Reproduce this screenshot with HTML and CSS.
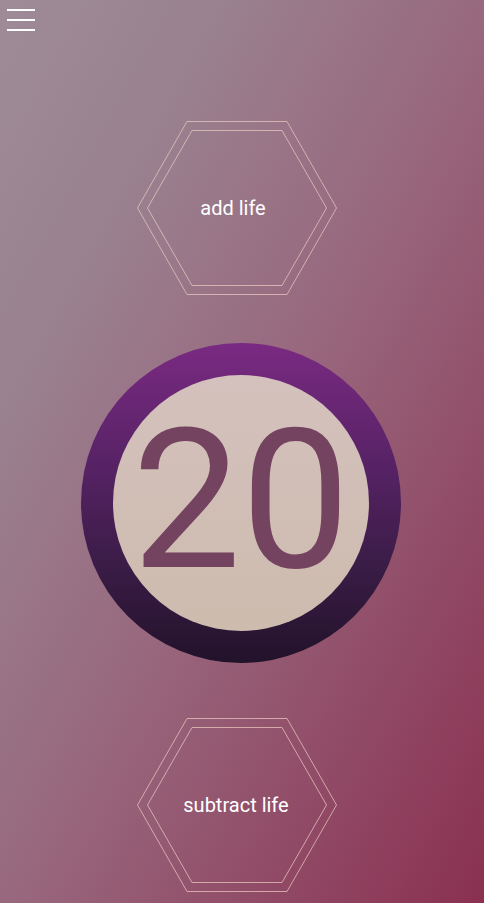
FILE: index.html
```html
<!DOCTYPE html>
<html lang="en">
<head>
<meta charset="utf-8">
<title>Life Counter</title>
<link rel="stylesheet" href="styles.css">
</head>
<body>
<div class="app">
  <header class="topbar">
    <button class="menu" aria-label="menu">
      <span class="bar"></span><span class="bar"></span><span class="bar"></span>
    </button>
  </header>
  <main class="stage">
    <button class="hex hex-add">
      <svg class="hex-shape" width="200" height="174" viewBox="0 0 200 174">
        <polygon points="50,0.5 150,0.5 199.5,87 150,173.5 50,173.5 0.5,87"/>
        <polygon points="55,9.5 145,9.5 189.5,87 145,164.5 55,164.5 10.5,87"/>
      </svg>
      <span class="hex-label label-add">add life</span>
    </button>
    <div class="counter">
      <div class="counter-face"><span class="life">20</span></div>
    </div>
    <button class="hex hex-sub">
      <svg class="hex-shape" width="200" height="174" viewBox="0 0 200 174">
        <polygon points="50,0.5 150,0.5 199.5,87 150,173.5 50,173.5 0.5,87"/>
        <polygon points="55,9.5 145,9.5 189.5,87 145,164.5 55,164.5 10.5,87"/>
      </svg>
      <span class="hex-label label-sub">subtract life</span>
    </button>
  </main>
</div>
</body>
</html>
```

FILE: styles.css
```css
* { box-sizing: border-box; }
html, body { margin: 0; padding: 0; }
body {
  width: 484px;
  height: 903px;
  overflow: hidden;
  font-family: Roboto, "Liberation Sans", sans-serif;
  background: linear-gradient(to bottom right, #9e8b97 0%, #9a8290 22%, #98677d 52%, #8a3050 100%);
}
.app { height: 903px; display: flex; flex-direction: column; }
.topbar { height: 31px; padding: 9px 0 0 7px; }
.menu {
  display: flex; flex-direction: column; gap: 8px;
  width: 28px; padding: 0; margin: 0; border: 0; background: none; cursor: pointer;
}
.bar { display: block; width: 28px; height: 2px; background: #ffffff; }
.stage {
  display: flex; flex-direction: column; align-items: center;
  padding-top: 90px;
}
.hex {
  display: grid; place-items: center;
  width: 200px; height: 174px;
  padding: 0; margin: 0 10px 0 0; border: 0; background: none; cursor: pointer;
}
.hex > * { grid-area: 1 / 1; }
.hex-shape { display: block; }
.hex-shape polygon { fill: none; stroke: rgba(236, 204, 192, 0.72); stroke-width: 1; }
.hex-label { color: #ffffff; font-size: 20px; font-family: Roboto, "Liberation Sans", sans-serif; }
.label-add { margin-right: 8px; }
.label-sub { margin-right: 2px; }
.counter {
  width: 320px; height: 320px; border-radius: 50%;
  padding: 32px; margin: 48px 2px 55px 0;
  background: linear-gradient(180deg, #7a2a82 0%, #5a2368 35%, #3a1c46 70%, #22122a 100%);
}
.counter-face {
  width: 256px; height: 256px; border-radius: 50%;
  display: flex; align-items: center; justify-content: center;
  background: linear-gradient(180deg, #d4c1bd 0%, #cdbbae 100%);
}
.life {
  font-size: 194px; line-height: 1; color: #74435f;
  font-family: Roboto, "Liberation Sans", sans-serif; font-weight: 400;
  margin-top: -4px;
}
```
